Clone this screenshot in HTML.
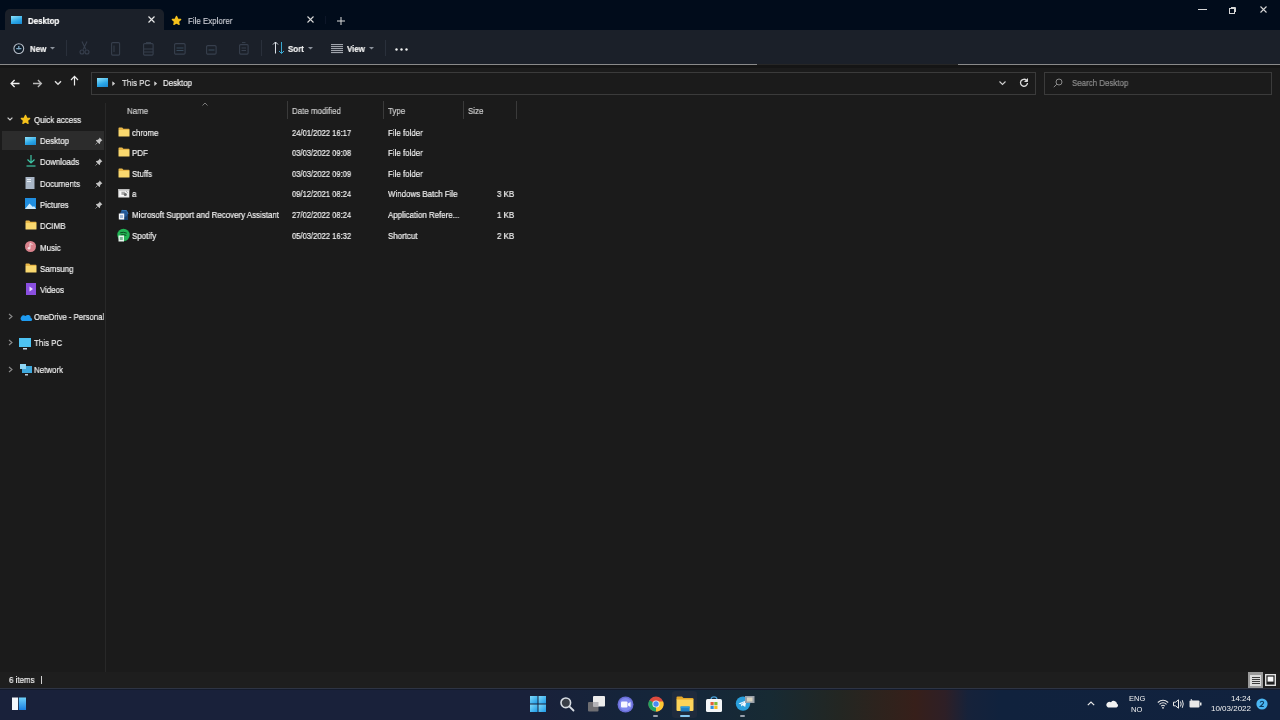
<!DOCTYPE html>
<html><head><meta charset="utf-8">
<style>
*{margin:0;padding:0;box-sizing:border-box}
html,body{width:1280px;height:720px;overflow:hidden;background:#1b1b1b;font-family:"Liberation Sans",sans-serif;color:#fff}
.a{position:absolute}
.t{position:absolute;font-size:9px;line-height:10px;white-space:nowrap;color:#f2f2f2;transform:scaleX(.88);transform-origin:0 0;will-change:transform;-webkit-text-stroke:.2px currentColor}
.b{font-weight:bold}
svg{position:absolute;overflow:visible}
.sep{position:absolute;width:1px;background:#2a303b}
.box{position:absolute;border:1px solid #3b3b3b;background:#1b1b1b}
.col{position:absolute;width:1px;background:#3a3a3a}
</style></head>
<body>
<div class="a" style="left:0;top:0;width:1280px;height:30px;background:#010c1b"></div>
<div class="a" style="left:5px;top:9px;width:159px;height:21px;background:#1b2029;border-radius:5px 5px 0 0"></div>
<div class="a" style="left:11px;top:16px;width:11px;height:8px;background:linear-gradient(160deg,#8fe3fb,#2aa6e6 60%,#1a86d0)"></div>
<div class="t" style="left:28px;top:16px;color:#fff;font-weight:bold">Desktop</div>
<svg style="left:148px;top:16px" width="7" height="7"><path d="M0.5 0.5L6.5 6.5M6.5 0.5L0.5 6.5" stroke="#e6e6e6" stroke-width="1.2"/></svg>
<svg style="left:171px;top:15px" width="11" height="11" viewBox="0 0 24 24"><path d="M12 3l2.8 5.9 6.4.8-4.8 4.4 1.3 6.4L12 17.3l-5.7 3.2 1.3-6.4-4.8-4.4 6.4-.8z" fill="#f6c21c" stroke="#f6c21c" stroke-width="2.6" stroke-linejoin="round"/></svg>
<div class="t" style="left:188px;top:16px;color:#c9cbd2">File Explorer</div>
<svg style="left:307px;top:16px" width="7" height="7"><path d="M0.5 0.5L6.5 6.5M6.5 0.5L0.5 6.5" stroke="#d8d8d8" stroke-width="1.1"/></svg>
<div class="a" style="left:325px;top:16px;width:1px;height:8px;background:#0d1628"></div>
<svg style="left:337px;top:17px" width="8" height="8"><path d="M4 0V8M0 4H8" stroke="#dcdcdc" stroke-width="1"/></svg>
<svg style="left:1198px;top:9px" width="9" height="2"><path d="M0 0.5H9" stroke="#d6d6d6" stroke-width="1"/></svg>
<svg style="left:1229px;top:6px" width="8" height="8"><path d="M2 1.5H6.5V6" fill="none" stroke="#d6d6d6" stroke-width="1"/><rect x="0.5" y="2.5" width="5" height="5" fill="none" stroke="#d6d6d6" stroke-width="1"/></svg>
<svg style="left:1260px;top:6px" width="7" height="7"><path d="M0.5 0.5L6.5 6.5M6.5 0.5L0.5 6.5" stroke="#d6d6d6" stroke-width="1.1"/></svg>
<div class="a" style="left:0;top:30px;width:1280px;height:34px;background:#1b2029"></div>
<svg style="left:13px;top:43px" width="12" height="12"><circle cx="5.8" cy="5.6" r="4.9" fill="#0e1a26" stroke="#b8bec8" stroke-width="1.1"/><path d="M5.8 3V6.5M3.2 5.6H8.4" stroke="#7fa8c4" stroke-width="1.3"/></svg>
<div class="t" style="left:30px;top:44px;color:#f2f2f2;font-weight:bold">New</div>
<svg style="left:50px;top:47px" width="5" height="3"><path d="M0 0L2.5 2.5L5 0" fill="#8c929c"/></svg>
<div class="sep" style="left:66px;top:40px;height:16px"></div>
<div class="sep" style="left:261px;top:40px;height:16px"></div>
<div class="sep" style="left:385px;top:40px;height:16px"></div>
<svg style="left:79px;top:41px" width="11" height="14"><path d="M3 0.5L6.8 8.5M8 0.5L4.2 8.5" stroke="#373f4d" stroke-width="1.1"/><circle cx="3" cy="11" r="2" fill="none" stroke="#373f4d" stroke-width="1.1"/><circle cx="8" cy="11" r="2" fill="none" stroke="#373f4d" stroke-width="1.1"/></svg>
<svg style="left:111px;top:42px" width="10" height="14"><rect x="0.6" y="0.6" width="8" height="12.5" rx="1" fill="none" stroke="#373f4d" stroke-width="1.1"/><path d="M3 3.5V10" stroke="#373f4d"/></svg>
<svg style="left:143px;top:42px" width="11" height="14"><rect x="0.6" y="1.6" width="9.5" height="11.5" rx="1" fill="none" stroke="#373f4d" stroke-width="1.1"/><path d="M3 0.6h5M0.6 7h9.5M0.6 10h9.5" stroke="#373f4d" stroke-width="1"/></svg>
<svg style="left:174px;top:43px" width="12" height="12"><rect x="0.6" y="0.6" width="10.5" height="10.5" rx="1.2" fill="none" stroke="#373f4d" stroke-width="1.1"/><path d="M2.5 5h7M2.5 7.5h7" stroke="#37495a" stroke-width="1.1"/></svg>
<svg style="left:206px;top:43px" width="11" height="12"><rect x="0.6" y="2.6" width="9.5" height="8.5" rx="1.2" fill="none" stroke="#373f4d" stroke-width="1.1"/><path d="M2.5 7h6" stroke="#37495a" stroke-width="1.1"/></svg>
<svg style="left:239px;top:42px" width="10" height="13"><rect x="0.6" y="2.6" width="8.5" height="9.5" rx="1" fill="none" stroke="#373f4d" stroke-width="1.1"/><path d="M3 0.6h3.5M2.5 6h4.5M2.5 8.5h4.5" stroke="#373f4d" stroke-width="1"/></svg>
<svg style="left:272px;top:41px" width="13" height="13"><path d="M3.5 12.5V1M1 3.5L3.5 1L6 3.5" fill="none" stroke="#dde2e8" stroke-width="1"/><path d="M9.5 1V12.5M7 10L9.5 12.5L12 10" fill="none" stroke="#3aa8d0" stroke-width="1"/></svg>
<div class="t" style="left:288px;top:44px;color:#f2f2f2;font-weight:bold">Sort</div>
<svg style="left:308px;top:47px" width="5" height="3"><path d="M0 0L2.5 2.5L5 0" fill="#8c929c"/></svg>
<svg style="left:331px;top:44px" width="12" height="10"><path d="M0 0.6H12M0 2.6H12M0 4.6H12M0 6.6H12M0 8.6H12" stroke="#d4d8de" stroke-width="0.8"/></svg>
<div class="t" style="left:347px;top:44px;color:#f2f2f2;font-weight:bold">View</div>
<svg style="left:369px;top:47px" width="5" height="3"><path d="M0 0L2.5 2.5L5 0" fill="#8c929c"/></svg>
<svg style="left:395px;top:48px" width="13" height="3"><circle cx="1.5" cy="1.5" r="1.2" fill="#f0f0f0"/><circle cx="6.5" cy="1.5" r="1.2" fill="#f0f0f0"/><circle cx="11.5" cy="1.5" r="1.2" fill="#f0f0f0"/></svg>
<div class="a" style="left:0;top:64px;width:757px;height:1px;background:#8a8a8a"></div>
<div class="a" style="left:757px;top:64px;width:201px;height:1px;background:#262626"></div>
<div class="a" style="left:958px;top:64px;width:322px;height:1px;background:#8a8a8a"></div>
<div class="a" style="left:0;top:65px;width:1280px;height:3px;background:#151515"></div>
<svg style="left:10px;top:79px" width="10" height="9"><path d="M9.5 4.5H1.2M4.6 1L1.1 4.5L4.6 8" fill="none" stroke="#f0f0f0" stroke-width="1.3"/></svg>
<svg style="left:33px;top:79px" width="10" height="9"><path d="M0 4.5H8.3M4.9 1L8.4 4.5L4.9 8" fill="none" stroke="#b8b8b8" stroke-width="1.3"/></svg>
<svg style="left:54px;top:80px" width="8" height="6"><path d="M1 1.2L4 4.3L7 1.2" fill="none" stroke="#dcdcdc" stroke-width="1.4"/></svg>
<svg style="left:70px;top:75px" width="9" height="11"><path d="M4.5 10.5V1.5M1 5L4.5 1.3L8 5" fill="none" stroke="#ececec" stroke-width="1.2"/></svg>
<div class="box" style="left:91px;top:72px;width:945px;height:23px"></div>
<div class="a" style="left:97px;top:78px;width:11px;height:9px;background:linear-gradient(160deg,#8fe3fb,#2aa6e6 60%,#1a86d0)"></div>
<svg style="left:112px;top:81px" width="4" height="6"><path d="M0.6 0.8L2.8 2.6L0.6 4.4Z" fill="#d0d0d0" stroke="#d0d0d0" stroke-width="0.6"/></svg>
<div class="t" style="left:122px;top:78px;color:#e8e8e8">This PC</div>
<svg style="left:154px;top:81px" width="4" height="6"><path d="M0.6 0.8L2.8 2.6L0.6 4.4Z" fill="#d0d0d0" stroke="#d0d0d0" stroke-width="0.6"/></svg>
<div class="t" style="left:163px;top:78px;color:#f2f2f2">Desktop</div>
<svg style="left:999px;top:81px" width="7" height="4"><path d="M0.5 0.5L3.5 3.5L6.5 0.5" fill="none" stroke="#d0d0d0" stroke-width="1.1"/></svg>
<svg style="left:1019px;top:78px" width="10" height="10"><path d="M8.5 5A3.5 3.5 0 1 1 7.5 2.3" fill="none" stroke="#dadada" stroke-width="1.3"/><path d="M8.5 0.5V3.5H5.5" fill="#dadada" stroke="#dadada"/></svg>
<div class="box" style="left:1044px;top:72px;width:228px;height:23px"></div>
<svg style="left:1053px;top:78px" width="10" height="10"><circle cx="6" cy="4" r="3" fill="none" stroke="#8a8a8a"/><path d="M3.8 6.2L0.8 9.2" stroke="#8a8a8a"/></svg>
<div class="t" style="left:1072px;top:78px;color:#8e8e8e">Search Desktop</div>
<div class="a" style="left:105px;top:103px;width:1px;height:569px;background:#282828"></div>
<svg style="left:7px;top:117px" width="6" height="4"><path d="M0.6 0.6L3 3L5.4 0.6" fill="none" stroke="#cfcfcf" stroke-width="1.2"/></svg>
<svg style="left:20px;top:114px" width="11" height="11" viewBox="0 0 24 24"><path d="M12 3l2.8 5.9 6.4.8-4.8 4.4 1.3 6.4L12 17.3l-5.7 3.2 1.3-6.4-4.8-4.4 6.4-.8z" fill="#f6c21c" stroke="#f6c21c" stroke-width="2.6" stroke-linejoin="round"/></svg>
<div class="t" style="left:34px;top:115px;">Quick access</div>
<div class="a" style="left:2px;top:131px;width:102px;height:19px;background:#2c2c2c"></div>
<div class="t" style="left:40px;top:136px;">Desktop</div>
<div class="a" style="left:25px;top:137px;width:11px;height:8px;background:linear-gradient(160deg,#8fe3fb,#2aa6e6 60%,#1a86d0)"></div>
<svg style="left:95px;top:137px" width="8" height="8" viewBox="0 0 8 8"><path d="M4.6 0.6L7.4 3.4L6.6 3.7L5.2 5.1L5 6.8L4.3 7L1 3.7L1.2 3L2.9 2.8L4.3 1.4Z" fill="#c4c4c4"/><path d="M2.6 5.4L0.5 7.5" stroke="#8a8a8a" stroke-width="1"/></svg>
<div class="t" style="left:40px;top:157px;">Downloads</div>
<svg style="left:26px;top:155px" width="10" height="12"><path d="M5 0V8M1.5 4.5L5 8L8.5 4.5" fill="none" stroke="#3fc7a7" stroke-width="1.2"/><path d="M0.5 11H9.5" stroke="#3fc7a7" stroke-width="1.2"/></svg>
<svg style="left:95px;top:158px" width="8" height="8" viewBox="0 0 8 8"><path d="M4.6 0.6L7.4 3.4L6.6 3.7L5.2 5.1L5 6.8L4.3 7L1 3.7L1.2 3L2.9 2.8L4.3 1.4Z" fill="#c4c4c4"/><path d="M2.6 5.4L0.5 7.5" stroke="#8a8a8a" stroke-width="1"/></svg>
<div class="t" style="left:40px;top:179px;">Documents</div>
<svg style="left:25px;top:177px" width="10" height="12"><rect x="0.5" y="0" width="9" height="12" fill="#a9b6c6"/><rect x="2" y="2" width="4" height="1" fill="#e8eef4"/><rect x="2" y="4" width="4" height="1" fill="#e8eef4"/></svg>
<svg style="left:95px;top:180px" width="8" height="8" viewBox="0 0 8 8"><path d="M4.6 0.6L7.4 3.4L6.6 3.7L5.2 5.1L5 6.8L4.3 7L1 3.7L1.2 3L2.9 2.8L4.3 1.4Z" fill="#c4c4c4"/><path d="M2.6 5.4L0.5 7.5" stroke="#8a8a8a" stroke-width="1"/></svg>
<div class="t" style="left:40px;top:200px;">Pictures</div>
<svg style="left:25px;top:198px" width="11" height="11"><rect width="11" height="11" fill="#1f8ee0"/><path d="M0 11L4.5 5.5L8 9L9 8L11 11Z" fill="#cdeafc"/></svg>
<svg style="left:95px;top:201px" width="8" height="8" viewBox="0 0 8 8"><path d="M4.6 0.6L7.4 3.4L6.6 3.7L5.2 5.1L5 6.8L4.3 7L1 3.7L1.2 3L2.9 2.8L4.3 1.4Z" fill="#c4c4c4"/><path d="M2.6 5.4L0.5 7.5" stroke="#8a8a8a" stroke-width="1"/></svg>
<div class="t" style="left:40px;top:221px;">DCIMB</div>
<svg style="left:25px;top:220px" width="12" height="10" viewBox="0 0 12 10"><path d="M0.5 1.2Q0.5 0.5 1.2 0.5H4.2L5.4 1.7H10.8Q11.5 1.7 11.5 2.4V3H0.5Z" fill="#e9b849"/><path d="M0.5 3H11.5V9Q11.5 9.5 11 9.5H1Q0.5 9.5 0.5 9Z" fill="#f9d86f"/></svg>
<div class="t" style="left:40px;top:243px;">Music</div>
<svg style="left:25px;top:241px" width="11" height="11"><circle cx="5.5" cy="5.5" r="5.5" fill="#d9828c"/><path d="M5 2.5V7.2M5 2.5L7.5 3.5" stroke="#f4dbe0" stroke-width="1"/><circle cx="4" cy="7.3" r="1.3" fill="#f4dbe0"/></svg>
<div class="t" style="left:40px;top:264px;">Samsung</div>
<svg style="left:25px;top:263px" width="12" height="10" viewBox="0 0 12 10"><path d="M0.5 1.2Q0.5 0.5 1.2 0.5H4.2L5.4 1.7H10.8Q11.5 1.7 11.5 2.4V3H0.5Z" fill="#e9b849"/><path d="M0.5 3H11.5V9Q11.5 9.5 11 9.5H1Q0.5 9.5 0.5 9Z" fill="#f9d86f"/></svg>
<div class="t" style="left:40px;top:285px;">Videos</div>
<svg style="left:26px;top:283px" width="10" height="12"><rect width="10" height="12" fill="#8a4fe0"/><path d="M3.5 3.5L7 6L3.5 8.5Z" fill="#eadcff"/></svg>
<svg style="left:8px;top:313px" width="5" height="7"><path d="M1 1L4 3.5L1 6" fill="none" stroke="#8c8c8c" stroke-width="1.1"/></svg>
<div class="t" style="left:34px;top:312px;transform:scaleX(.86)">OneDrive - Personal</div>
<svg style="left:8px;top:339px" width="5" height="7"><path d="M1 1L4 3.5L1 6" fill="none" stroke="#8c8c8c" stroke-width="1.1"/></svg>
<div class="t" style="left:34px;top:338px;">This PC</div>
<svg style="left:8px;top:366px" width="5" height="7"><path d="M1 1L4 3.5L1 6" fill="none" stroke="#8c8c8c" stroke-width="1.1"/></svg>
<div class="t" style="left:34px;top:365px;">Network</div>
<svg style="left:19px;top:313px" width="13" height="8"><path d="M3 8H11.5A1.5 1.5 0 0 0 11.8 5A3 3 0 0 0 6.5 3A2.5 2.5 0 0 0 3 8Z" fill="#1e9bf0"/></svg>
<svg style="left:19px;top:338px" width="12" height="12"><rect y="0" width="12" height="9" fill="#4ec3f2"/><rect x="4" y="10" width="4" height="1.5" fill="#c8d8e6"/></svg>
<svg style="left:20px;top:364px" width="12" height="12"><rect x="2" y="2" width="10" height="7" fill="#3fa8dc"/><rect x="0" y="0" width="6" height="5" fill="#8fd6f4"/><rect x="5" y="10" width="3" height="1.5" fill="#b8c8d4"/></svg>
<div class="t" style="left:127px;top:106px;color:#cfcfcf">Name</div>
<svg style="left:202px;top:102px" width="6" height="4"><path d="M0.5 3.5L3 1L5.5 3.5" fill="none" stroke="#7a7a7a" stroke-width="1"/></svg>
<div class="t" style="left:292px;top:106px;color:#cfcfcf">Date modified</div>
<div class="t" style="left:388px;top:106px;color:#cfcfcf">Type</div>
<div class="t" style="left:468px;top:106px;color:#cfcfcf">Size</div>
<div class="col" style="left:287px;top:101px;height:18px"></div>
<div class="col" style="left:383px;top:101px;height:18px"></div>
<div class="col" style="left:463px;top:101px;height:18px"></div>
<div class="col" style="left:516px;top:101px;height:18px"></div>
<div class="t" style="left:132px;top:128px;">chrome</div>
<div class="t" style="left:292px;top:128px;transform:scaleX(.845)">24/01/2022 16:17</div>
<div class="t" style="left:388px;top:128px;">File folder</div>
<svg style="left:118px;top:127px" width="12" height="10" viewBox="0 0 12 10"><path d="M0.5 1.2Q0.5 0.5 1.2 0.5H4.2L5.4 1.7H10.8Q11.5 1.7 11.5 2.4V3H0.5Z" fill="#e9b849"/><path d="M0.5 3H11.5V9Q11.5 9.5 11 9.5H1Q0.5 9.5 0.5 9Z" fill="#f9d86f"/></svg>
<div class="t" style="left:132px;top:148px;">PDF</div>
<div class="t" style="left:292px;top:148px;transform:scaleX(.845)">03/03/2022 09:08</div>
<div class="t" style="left:388px;top:148px;">File folder</div>
<svg style="left:118px;top:147px" width="12" height="10" viewBox="0 0 12 10"><path d="M0.5 1.2Q0.5 0.5 1.2 0.5H4.2L5.4 1.7H10.8Q11.5 1.7 11.5 2.4V3H0.5Z" fill="#e9b849"/><path d="M0.5 3H11.5V9Q11.5 9.5 11 9.5H1Q0.5 9.5 0.5 9Z" fill="#f9d86f"/></svg>
<div class="t" style="left:132px;top:169px;">Stuffs</div>
<div class="t" style="left:292px;top:169px;transform:scaleX(.845)">03/03/2022 09:09</div>
<div class="t" style="left:388px;top:169px;">File folder</div>
<svg style="left:118px;top:168px" width="12" height="10" viewBox="0 0 12 10"><path d="M0.5 1.2Q0.5 0.5 1.2 0.5H4.2L5.4 1.7H10.8Q11.5 1.7 11.5 2.4V3H0.5Z" fill="#e9b849"/><path d="M0.5 3H11.5V9Q11.5 9.5 11 9.5H1Q0.5 9.5 0.5 9Z" fill="#f9d86f"/></svg>
<div class="t" style="left:132px;top:189px;">a</div>
<div class="t" style="left:292px;top:189px;transform:scaleX(.845)">09/12/2021 08:24</div>
<div class="t" style="left:388px;top:189px;">Windows Batch File</div>
<div class="t" style="left:497px;top:189px">3 KB</div>
<svg style="left:118px;top:189px" width="12" height="9"><rect x="0.3" y="0" width="11" height="8.5" fill="#ececec"/><rect x="0.3" y="0" width="11" height="1.6" fill="#bdbdbd"/><path d="M2.5 2.5V6.5H6" fill="none" stroke="#fafafa" stroke-width="1.2"/><rect x="3.5" y="2.8" width="3.5" height="3" fill="#a8a8a8"/><circle cx="7.3" cy="5.6" r="1.5" fill="#6a6a6a"/><path d="M8.3 2.3L9.6 3.6" stroke="#9a9a9a" stroke-width="1"/></svg>
<div class="t" style="left:132px;top:210px;">Microsoft Support and Recovery Assistant</div>
<div class="t" style="left:292px;top:210px;transform:scaleX(.845)">27/02/2022 08:24</div>
<div class="t" style="left:388px;top:210px;">Application Refere...</div>
<div class="t" style="left:497px;top:210px">1 KB</div>
<svg style="left:117px;top:209px" width="12" height="12"><path d="M5.5 0.5L11 3.5V11H3Z" fill="#173f6e"/><circle cx="7" cy="4.5" r="3.6" fill="#235896"/><path d="M4.5 1.5L9.5 1.5L11 5" fill="none" stroke="#2f74b8" stroke-width="1"/><rect x="1.8" y="4.5" width="5.4" height="6" fill="#f2f6fa"/><rect x="3" y="6" width="3" height="3" fill="#9fb8d6"/></svg>
<div class="t" style="left:132px;top:231px;">Spotify</div>
<div class="t" style="left:292px;top:231px;transform:scaleX(.845)">05/03/2022 16:32</div>
<div class="t" style="left:388px;top:231px;">Shortcut</div>
<div class="t" style="left:497px;top:231px">2 KB</div>
<svg style="left:117px;top:228px" width="13" height="14"><circle cx="6.5" cy="7" r="6.2" fill="#22b454"/><path d="M3.2 4.8Q6.5 3.6 9.8 5.2M3.6 7Q6.5 6 9.3 7.4" stroke="#0c4a20" stroke-width="1" fill="none"/><rect x="1.5" y="7.5" width="5.5" height="6" fill="#e8f6ee"/><rect x="2.8" y="9" width="3" height="3" fill="#7fb898"/></svg>
<div class="a" style="left:0;top:672px;width:1280px;height:16px;background:#1e1e1e"></div>
<div class="t" style="left:9px;top:675px;">6 items</div>
<div class="a" style="left:41px;top:676px;width:1px;height:8px;background:#d0d0d0"></div>
<div class="a" style="left:1248px;top:672px;width:15px;height:16px;background:#9a9a9a"></div>
<div class="a" style="left:1250px;top:675px;width:11px;height:11px;background:#dcdcdc"></div>
<svg style="left:1252px;top:677px" width="8" height="8"><path d="M0 0.5H8M0 2.5H8M0 4.5H8M0 6.5H8" stroke="#2a2a2a" stroke-width="0.9"/></svg>
<svg style="left:1265px;top:674px" width="11" height="12"><rect x="0.7" y="0.7" width="9.6" height="10.6" fill="none" stroke="#e0e0e0" stroke-width="1.4"/><rect x="2.6" y="2.6" width="5.8" height="5" fill="#fafafa"/></svg>
<div class="a" style="left:0;top:688px;width:1280px;height:32px;background:linear-gradient(90deg,#19213a 0px,#19213a 540px,#15243a 620px,#152739 700px,#172a33 770px,#232622 840px,#30221c 890px,#371f1a 915px,#2e1f26 945px,#16223a 968px,#10223d 1000px,#11223e 1280px)"></div>
<div class="a" style="left:0;top:688px;width:1280px;height:1px;background:#2e3444"></div>
<div class="a" style="left:0;top:689px;width:1280px;height:1px;background:#141b2c"></div>
<svg style="left:12px;top:697px" width="15" height="13"><rect x="0" y="0.5" width="6" height="12.5" fill="#f4f8fc"/><defs><linearGradient id="wg" x1="0" y1="0" x2="0" y2="1"><stop offset="0" stop-color="#6fd2fb"/><stop offset="1" stop-color="#1a7fe0"/></linearGradient></defs><rect x="6.8" y="0.5" width="7.2" height="12.5" fill="url(#wg)"/></svg>
<svg style="left:530px;top:696px" width="16" height="16"><defs><linearGradient id="win" x1="0" y1="0" x2="1" y2="1"><stop offset="0" stop-color="#80dafc"/><stop offset="1" stop-color="#1d9ae6"/></linearGradient></defs><rect x="0" y="0" width="7.5" height="7.5" fill="url(#win)"/><rect x="8.5" y="0" width="7.5" height="7.5" fill="url(#win)"/><rect x="0" y="8.5" width="7.5" height="7.5" fill="url(#win)"/><rect x="8.5" y="8.5" width="7.5" height="7.5" fill="url(#win)"/></svg>
<svg style="left:560px;top:697px" width="15" height="15"><circle cx="5.8" cy="5.8" r="4.8" fill="#3a3f48" stroke="#d8dde4" stroke-width="1.6"/><path d="M9.3 9.3L13.5 13.5" stroke="#d8dde4" stroke-width="1.8" stroke-linecap="round"/></svg>
<svg style="left:588px;top:696px" width="17" height="16"><rect x="0" y="6" width="10.5" height="9.5" rx="1" fill="#6e6e72"/><rect x="5" y="0" width="12" height="10.5" rx="1" fill="#ececec"/><rect x="5" y="6" width="5.5" height="4.5" fill="#b4b4b8"/></svg>
<svg style="left:617px;top:696px" width="17" height="17"><circle cx="8.5" cy="8.5" r="8" fill="#6b6fd8"/><circle cx="8.5" cy="8.5" r="6.5" fill="#8088ee"/><rect x="4" y="5.5" width="6.5" height="6" rx="1" fill="#f8f8ff"/><path d="M11 7.5L13.5 6V11L11 9.5Z" fill="#f8f8ff"/></svg>
<svg style="left:648px;top:696px" width="16" height="16" viewBox="0 0 16 16"><circle cx="8" cy="8" r="7.6" fill="#dd4b3e"/><path d="M8 8L1.4 4.2A7.6 7.6 0 0 0 8 15.6Z" fill="#1ea362"/><path d="M8 8L8 15.6A7.6 7.6 0 0 0 15.2 5.6L8 5.6Z" fill="#fcc934"/><circle cx="8" cy="8" r="3.6" fill="#f1f1f1"/><circle cx="8" cy="8" r="2.7" fill="#4a8af4"/></svg>
<div class="a" style="left:653px;top:715px;width:5px;height:2px;border-radius:1px;background:#98a0ac"></div>
<div class="a" style="left:672px;top:691px;width:25px;height:27px;border-radius:3px;background:#1f2b3d"></div>
<svg style="left:676px;top:696px" width="18" height="16"><path d="M0.5 1.5Q0.5 0.5 1.5 0.5H6L7.5 2H16.5Q17.5 2 17.5 3V4H0.5Z" fill="#e6a92a"/><path d="M0.5 3.5H17.5V14Q17.5 15 16.5 15H1.5Q0.5 15 0.5 14Z" fill="#fcd45a"/><rect x="4.6" y="10.5" width="9" height="5" fill="#1f7fc4"/><rect x="4.6" y="10.5" width="9" height="1.6" fill="#2a9be0"/></svg>
<div class="a" style="left:680px;top:715px;width:10px;height:2px;border-radius:1px;background:#86c8f2"></div>
<svg style="left:706px;top:696px" width="16" height="17"><path d="M5 3.5Q5 0.8 8 0.8Q11 0.8 11 3.5" fill="none" stroke="#4aa0d8" stroke-width="1.2"/><rect x="0" y="3" width="16" height="13" rx="1.5" fill="#f4f6f8"/><rect x="4.5" y="6" width="3.2" height="3.2" fill="#e2603a"/><rect x="8.3" y="6" width="3.2" height="3.2" fill="#7cbb36"/><rect x="4.5" y="9.8" width="3.2" height="3.2" fill="#2f8ee0"/><rect x="8.3" y="9.8" width="3.2" height="3.2" fill="#f7b91e"/></svg>
<svg style="left:735px;top:696px" width="20" height="16"><circle cx="8" cy="7.6" r="7.2" fill="#2a9fdb"/><path d="M3.5 7.4L11.5 4.2L10.2 11L7.6 9.2L6.2 10.4L6 8.6L10 5.6L5.4 8.2Z" fill="#f0f8ff"/><rect x="10" y="0" width="9.5" height="7" fill="#9aa0a8"/><rect x="12" y="1.5" width="5.5" height="4" fill="#d8d4c0"/></svg>
<div class="a" style="left:740px;top:715px;width:5px;height:2px;border-radius:1px;background:#98a0ac"></div>
<svg style="left:1087px;top:701px" width="8" height="5"><path d="M0.8 4.2L4 1L7.2 4.2" fill="none" stroke="#e8e8e8" stroke-width="1.2"/></svg>
<svg style="left:1105px;top:699px" width="14" height="9"><path d="M3 8.5H11.5A2 2 0 0 0 12 4.8A3.3 3.3 0 0 0 6 3.2A2.6 2.6 0 0 0 3 8.5Z" fill="#f2f2f2"/></svg>
<div class="a" style="left:1129px;top:694px;font-size:7.5px;line-height:9px;color:#f2f2f2;font-family:Liberation Sans,sans-serif;will-change:transform">ENG</div>
<div class="a" style="left:1131px;top:705px;font-size:7.5px;line-height:9px;color:#f2f2f2;font-family:Liberation Sans,sans-serif;will-change:transform">NO</div>
<svg style="left:1157px;top:699px" width="12" height="10"><path d="M0.8 3.5Q6 -1 11.2 3.5" fill="none" stroke="#e8e8e8" stroke-width="1.1"/><path d="M2.5 5.3Q6 2.2 9.5 5.3" fill="none" stroke="#e8e8e8" stroke-width="1.1"/><path d="M4.2 7.1Q6 5.5 7.8 7.1" fill="none" stroke="#e8e8e8" stroke-width="1.1"/><circle cx="6" cy="8.8" r="0.9" fill="#e8e8e8"/></svg>
<svg style="left:1173px;top:699px" width="11" height="10"><path d="M0.5 3.2H2.5L5.5 0.8V9.2L2.5 6.8H0.5Z" fill="none" stroke="#e8e8e8" stroke-width="1"/><path d="M7.5 2.5Q8.8 5 7.5 7.5M9.3 1.2Q11.2 5 9.3 8.8" fill="none" stroke="#e8e8e8" stroke-width="1"/></svg>
<svg style="left:1189px;top:699px" width="13" height="9"><rect x="0.5" y="1.5" width="10" height="7" rx="1" fill="#e8e8e8"/><rect x="11" y="3.5" width="1.5" height="3" fill="#e8e8e8"/><path d="M2 0L3.5 3" stroke="#e8e8e8"/></svg>
<div class="a" style="left:1211px;top:694px;width:40px;text-align:right;font-size:8px;line-height:9px;color:#f2f2f2;font-family:Liberation Sans,sans-serif;will-change:transform">14:24</div>
<div class="a" style="left:1208px;top:704px;width:43px;text-align:right;font-size:8px;line-height:9px;color:#f2f2f2;font-family:Liberation Sans,sans-serif;will-change:transform">10/03/2022</div>
<svg style="left:1256px;top:698px" width="12" height="12"><circle cx="6" cy="6" r="5.6" fill="#4cb6f2"/><path d="M4.2 4.5Q4.6 3.2 6 3.2Q7.6 3.2 7.6 4.5Q7.6 5.5 4.3 8.5H7.8" fill="none" stroke="#0b3a5c" stroke-width="1.1"/></svg>
</body></html>
